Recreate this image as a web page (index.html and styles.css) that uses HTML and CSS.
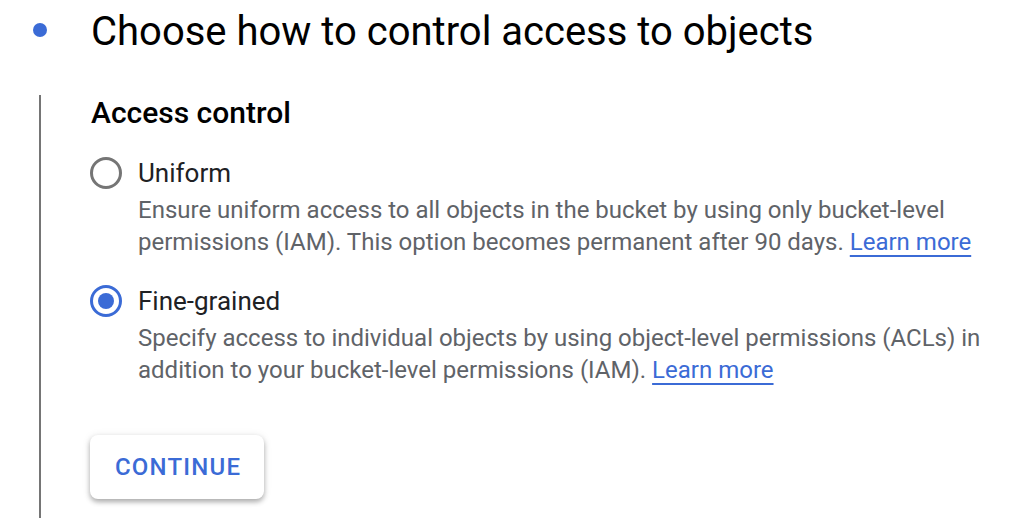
FILE: index.html
```html
<!DOCTYPE html>
<html lang="en">
<head>
    <meta charset="UTF-8">
    <meta name="viewport" content="width=device-width, initial-scale=1.0">
    <title>Create a bucket</title>
    <link rel="stylesheet" href="styles.css">
</head>
<body>
    <div class="step">
        <div class="step-header">
            <span class="step-dot"></span>
            <h2 class="step-title">Choose how to control access to objects</h2>
        </div>

        <div class="step-body">
            <h3 class="section-title">Access control</h3>

            <label class="option">
                <input type="radio" name="access" value="uniform">
                <span class="radio"></span>
                <span class="option-text">
                    <span class="option-label">Uniform</span>
                    <span class="option-desc">Ensure uniform access to all objects in the bucket by using only bucket-level permissions (IAM). This option becomes permanent after 90 days. <a href="#" class="link">Learn more</a></span>
                </span>
            </label>

            <label class="option">
                <input type="radio" name="access" value="fine" checked>
                <span class="radio"></span>
                <span class="option-text">
                    <span class="option-label">Fine-grained</span>
                    <span class="option-desc">Specify access to individual objects by using object-level permissions (ACLs) in addition to your bucket-level permissions (IAM). <a href="#" class="link">Learn more</a></span>
                </span>
            </label>

            <button class="btn">CONTINUE</button>
        </div>
    </div>
</body>
</html>
```

FILE: styles.css
```css
* {
    margin: 0;
    padding: 0;
    box-sizing: border-box;
}

body {
    font-family: Roboto, 'Liberation Sans', sans-serif;
    background: white;
    color: #202124;
    overflow: hidden;
}

.step-header {
    display: flex;
    align-items: center;
    height: 62px;
    padding-top: 2px;
}

.step-dot {
    width: 14px;
    height: 14px;
    border-radius: 50%;
    background: #3b6bd6;
    margin-left: 33px;
    margin-right: 44px;
    margin-bottom: 4px;
}

.step-title {
    font-size: 40px;
    line-height: 60px;
    font-weight: 400;
    color: #000;
}

.step-body {
    margin-left: 39px;
    margin-top: 33px;
    border-left: 2px solid #757575;
    padding-left: 50px;
    padding-bottom: 40px;
    min-height: 430px;
}

.section-title {
    font-size: 30px;
    font-weight: 500;
    color: #000;
    margin-bottom: 25px;
}

.option {
    display: flex;
    align-items: flex-start;
    margin-bottom: 25px;
    cursor: pointer;
}

.option input {
    display: none;
}

.radio {
    flex: none;
    width: 32px;
    height: 32px;
    border: 3px solid #757575;
    border-radius: 50%;
    margin-top: 2px;
    margin-left: -1px;
    margin-right: 16px;
    position: relative;
}

.option input:checked + .radio {
    border-color: #3b6bd6;
}

.option input:checked + .radio::after {
    content: '';
    position: absolute;
    top: 5px;
    left: 5px;
    width: 16px;
    height: 16px;
    border-radius: 50%;
    background: #3b6bd6;
}

.option-text {
    display: flex;
    flex-direction: column;
}

.option-label {
    font-size: 26px;
    line-height: 36px;
    color: #202124;
}

.option-desc {
    font-size: 24px;
    line-height: 32px;
    margin-top: 3px;
    color: #5f6368;
}

.link {
    color: #3b6bd6;
    text-decoration: underline;
    text-decoration-thickness: 2px;
    text-underline-offset: 5px;
}

.btn {
    background: white;
    color: #3b6bd6;
    font-family: Roboto, 'Liberation Sans', sans-serif;
    font-size: 24px;
    font-weight: 500;
    letter-spacing: 1.2px;
    padding: 18px 23px 18px 25px;
    border: none;
    border-radius: 8px;
    margin-top: 24px;
    margin-left: -1px;
    box-shadow: 0 3px 5px rgba(0,0,0,0.28), 0 1px 8px rgba(0,0,0,0.1);
    cursor: pointer;
}
```
